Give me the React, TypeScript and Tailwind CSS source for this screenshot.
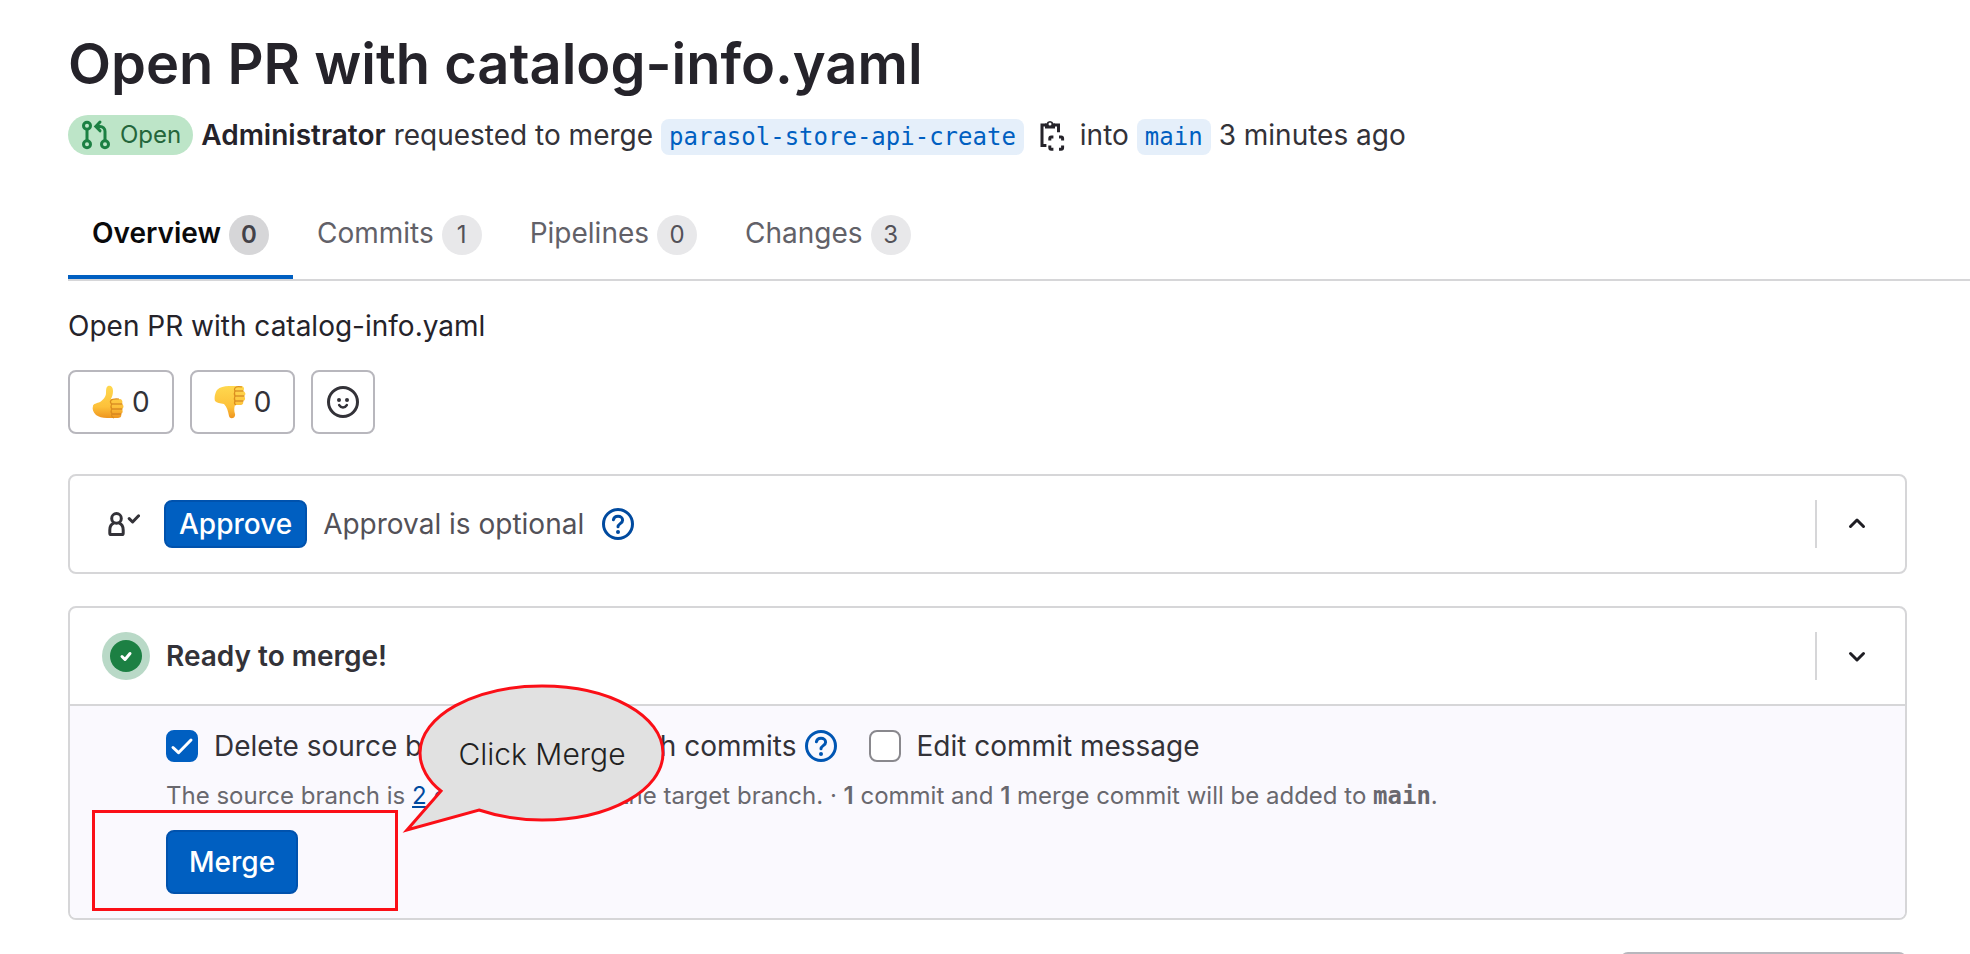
import { useState } from "react";
import type { ReactNode } from "react";

function MergeRequestIcon() {
  return (
    <svg viewBox="0 0 16 16" className="size-8" fill="none" stroke="currentColor" strokeWidth="1.5" aria-hidden="true">
      <circle cx="3.5" cy="3.4" r="1.75" />
      <circle cx="3.5" cy="12.6" r="1.75" />
      <circle cx="12.5" cy="12.6" r="1.75" />
      <path d="M3.5 5.2v5.6M12.5 10.8V6.2a2.5 2.5 0 0 0-2.5-2.5H8.4" />
      <path d="M10 1.5 7.9 3.7 10 5.9" strokeLinecap="round" />
    </svg>
  );
}

function CopyIcon() {
  return (
    <svg viewBox="0 0 16 16" className="size-8" fill="none" stroke="currentColor" strokeWidth="1.5" aria-hidden="true">
      <path d="M5 3H3v10.250h2.200M9 3h2.250v3.600" />
      <path
        d="M4.500 4.750V2.250h.7a1.900 1.900 0 0 1 3.600 0h.7v2.500zM7 1.800a.75.75 0 1 0 0 1.500.75.75 0 0 0 0-1.500z"
        fill="currentColor"
        fillRule="evenodd"
        stroke="none"
      />
      <path d="M6.900 10.800V9.650c0-.4.3-.7.7-.7h1.100M11.500 8.950h1.100c.4 0 .7.3.7.7v1.150M13.300 13.200v1.200c0 .4-.3.7-.7.7h-1.100M8.700 15.100H7.600c-.4 0-.7-.3-.7-.7v-1.200" />
    </svg>
  );
}

function SmileyIcon() {
  return (
    <svg viewBox="0 0 16 16" className="size-8" fill="none" aria-hidden="true">
      <circle cx="8" cy="8" r="7.25" stroke="currentColor" strokeWidth="1.5" />
      <circle cx="6" cy="7" r="1" fill="currentColor" />
      <circle cx="10" cy="7" r="1" fill="currentColor" />
      <path d="M6.1 9.6c.9 1.5 2.9 1.5 3.8 0" stroke="currentColor" strokeWidth="1.3" strokeLinecap="round" />
    </svg>
  );
}

function ApprovalIcon() {
  return (
    <svg viewBox="0 0 16 16" className="size-8" fill="none" stroke="currentColor" strokeWidth="1.5" aria-hidden="true">
      <circle cx="4.25" cy="5.2" r="2.4" />
      <path d="M2.9 7.6C1.4 8.2.9 9.4.9 11v1.6c0 .4.3.7.7.7h5.300c.4 0 .7-.3.7-.7V11c0-1.600-.5-2.800-2-3.400" />
      <path d="m10.6 5.3 1.7 1.7 3-3.1" strokeLinecap="round" strokeLinejoin="round" />
    </svg>
  );
}

function QuestionIcon() {
  return (
    <svg viewBox="0 0 16 16" className="size-8" fill="none" aria-hidden="true">
      <circle cx="8" cy="8" r="7.25" stroke="currentColor" strokeWidth="1.5" />
      <path d="M5.7 5.9c.2-1.1 1.1-1.75 2.3-1.75 1.3 0 2.3.8 2.3 1.95 0 1.7-2.3 1.7-2.3 3.3" stroke="currentColor" strokeWidth="1.5" strokeLinecap="round" />
      <circle cx="8" cy="12" r="1" fill="currentColor" />
    </svg>
  );
}

function Chevron({ up }: { up?: boolean }) {
  return (
    <svg viewBox="0 0 16 16" className="size-8" fill="none" stroke="currentColor" strokeWidth="1.5" strokeLinecap="round" strokeLinejoin="round" aria-hidden="true">
      <path d={up ? "M4.75 9.25 8 6l3.25 3.25" : "M4.75 6.75 8 10l3.25-3.25"} />
    </svg>
  );
}

function StatusIcon() {
  return (
    <svg viewBox="0 0 48 48" className="size-12" fill="none" aria-hidden="true">
      <circle cx="24" cy="24" r="24" fill="#b9d9c7" />
      <circle cx="24" cy="24" r="16" fill="#1c8043" />
      <path d="m20 24.5 3 3 5-6" stroke="#fff" strokeWidth="3" strokeLinecap="round" strokeLinejoin="round" />
    </svg>
  );
}

function Thumb({ down }: { down?: boolean }) {
  return (
    <svg viewBox="0 0 32 34" className="h-[34px] w-8" aria-hidden="true">
      <defs>
        <linearGradient id={down ? "skin-down" : "skin-up"} x1="0" y1="0" x2="0" y2="1">
          <stop offset="0" stopColor="#ffd84f" />
          <stop offset="0.65" stopColor="#fdc13a" />
          <stop offset="1" stopColor="#ee951f" />
        </linearGradient>
      </defs>
      {down ? (
        <g>
          <path d="M3 5C6 2 10 1 15 1h12c3 0 4 3 2 5 3 1 3 4 1 5 2 2 1 5-1 5 1 3-1 4-3 4h-5c-1 3-1 6 0 9 1 4-5 6-6 2-1-5-2-9-5-12-4-1-7-1-9-3C0 13 1 8 3 5z" fill="url(#skin-down)" />
          <path d="M21 6h8M21 11h9M21 16h8" stroke="#c9761a" strokeWidth="1.2" fill="none" strokeLinecap="round" />
          <path d="M28 2c-3-.6-6-.6-7 1-1 1-.6 2 0 3-1 2-1 3 0 5-1 2-1 3 0 5-1 2-1 3 1 4" stroke="#dc8d1e" strokeWidth="1.2" fill="none" />
        </g>
      ) : (
        <g>
          <path d="M1 21c0-2 4-3 7-4 3-2 6-5 6-9 0-3 0-6 2-7 3-1 5 1 5 5 0 3-1 6-2 8h8c3 0 4 2 3 5 2 1 2 4 0 5 1 2 1 4-1 5 1 3-1 4-4 4H15c-5 0-8-1-11-3-3-3-4-6-3-9z" fill="url(#skin-up)" />
          <path d="M20 19h10M20 24h10M20 29h9" stroke="#c9761a" strokeWidth="1.2" fill="none" strokeLinecap="round" />
          <path d="M27 14c-4-.4-7 0-8 1.500-1 1-.4 2.500.6 3.500-1 2-1 3 0 5-1 2-1 3 .4 5-1 2 0 3 2 4" stroke="#dc8d1e" strokeWidth="1.2" fill="none" />
        </g>
      )}
    </svg>
  );
}

function BranchLink({ children }: { children: ReactNode }) {
  return (
    <a href="#branch" className="mt-1 flex h-9 items-center rounded-lg bg-[#e5effa] px-2 font-['DejaVu_Sans_Mono',monospace] text-[24px] text-[#005fc1]">
      {children}
    </a>
  );
}

function Tab({ label, count, active }: { label: string; count: number; active?: boolean }) {
  return (
    <a
      href={"#" + label.toLowerCase()}
      className={
        "flex h-[86px] items-start gap-2 border-b-4 px-6 pt-[22px] " +
        (active ? "border-[#005fc1] font-semibold text-[#0a0a0b]" : "border-transparent text-[#626168]")
      }
    >
      <span className="leading-9">{label}</span>
      <span
        className={
          "grid size-10 place-items-center rounded-full text-[24px] leading-6 " +
          (active ? "bg-[#d6d6d8] text-[#434248]" : "bg-[#e8e8ea] text-[#535158]")
        }
      >
        {count}
      </span>
    </a>
  );
}

function CheckField({ id, label, initial }: { id: string; label: string; initial?: boolean }) {
  const [on, setOn] = useState(!!initial);
  return (
    <div className="flex items-center gap-4">
      <span className="grid">
        <input
          id={id}
          type="checkbox"
          checked={on}
          onChange={() => setOn(!on)}
          className="col-start-1 row-start-1 size-8 appearance-none rounded-lg border-2 border-[#89888d] bg-white checked:border-[#005fc1] checked:bg-[#005fc1]"
        />
        {on && (
          <svg viewBox="0 0 32 32" className="pointer-events-none col-start-1 row-start-1 size-8" fill="none" aria-hidden="true">
            <path d="m7 17.500 5.500 5.200L25 10" stroke="#fff" strokeWidth="3" strokeLinecap="round" strokeLinejoin="round" />
          </svg>
        )}
      </span>
      <label htmlFor={id}>{label}</label>
    </div>
  );
}

function Toggle({ up }: { up?: boolean }) {
  return (
    <div className="ml-auto flex h-12 items-center border-l-2 border-[#d6d6d8] pl-6 text-[#1f1e24]">
      <button type="button" aria-label={up ? "Collapse" : "Expand"}>
        <Chevron up={up} />
      </button>
    </div>
  );
}

function Callout() {
  return (
    <div className="pointer-events-none absolute -top-[22px] left-[332px] grid h-[152px] w-[264px]">
      <svg viewBox="0 0 264 152" className="col-start-1 row-start-1 size-full" aria-hidden="true">
        <path
          d="M39 107C26 97 18 83 18 69 18 32 72 2 140 2s121 30 121 67-53 67-121 67c-23 0-45-4-63-10L5 146z"
          fill="#e1e1e1"
          stroke="#fb0f17"
          strokeWidth="3"
        />
      </svg>
      <p className="col-start-1 row-start-1 pt-[52px] pl-4 text-center text-[30px] leading-9 font-light text-[#212121]">Click Merge</p>
    </div>
  );
}

export default function App() {
  return (
    <main className="h-screen overflow-hidden bg-white pl-[68px] font-[Inter,sans-serif] text-[28px] leading-9 text-[#333238]">
      <h1 className="pt-7 text-[56px] leading-[72px] font-semibold text-[#25232a]">Open PR with catalog-info.yaml</h1>

      <div className="mt-[15px] flex h-10 items-center gap-2">
        <span className="flex h-10 items-center gap-2 rounded-full bg-[#bde5c8] px-3 text-[24px] text-[#24663b]">
          <span className="text-[#1c8043]">
            <MergeRequestIcon />
          </span>
          Open
        </span>
        <a href="#administrator" className="font-semibold text-[#25232a]">Administrator</a>
        <span>requested to merge</span>
        <BranchLink>parasol-store-api-create</BranchLink>
        <button type="button" aria-label="Copy branch name" className="mx-1 text-[#25232a]">
          <CopyIcon />
        </button>
        <span>into</span>
        <BranchLink>main</BranchLink>
        <span>3 minutes ago</span>
      </div>

      <nav className="mt-[38px] flex border-b-2 border-[#d6d6d8]">
        <Tab label="Overview" count={0} active />
        <Tab label="Commits" count={1} />
        <Tab label="Pipelines" count={0} />
        <Tab label="Changes" count={3} />
      </nav>

      <div className="pr-[63px]">
        <p className="mt-[27px] text-[#25232a]">Open PR with catalog-info.yaml</p>

        <div className="mt-[26px] flex gap-4">
          <button type="button" className="flex h-16 items-center gap-2 rounded-lg border-2 border-[#b8b7bd] px-[22px]">
            <Thumb />
            <span>0</span>
          </button>
          <button type="button" className="flex h-16 items-center gap-2 rounded-lg border-2 border-[#b8b7bd] px-[22px]">
            <Thumb down />
            <span>0</span>
          </button>
          <button type="button" aria-label="Add reaction" className="grid size-16 place-items-center rounded-lg border-2 border-[#b8b7bd]">
            <SmileyIcon />
          </button>
        </div>

        <section className="mt-10 flex h-[100px] items-center rounded-lg border-2 border-[#d6d6d8] pr-8 pl-[38px]">
          <ApprovalIcon />
          <button type="button" className="ml-6 h-12 rounded-lg border-2 border-[#0052ad] bg-[#005fc1] px-[13px] leading-8 font-medium text-white">
            Approve
          </button>
          <span className="ml-4 text-[#535158]">Approval is optional</span>
          <button type="button" aria-label="About approvals" className="ml-[18px] text-[#004a9f]">
            <QuestionIcon />
          </button>
          <Toggle up />
        </section>

        <section className="mt-8 rounded-lg border-2 border-[#d6d6d8]">
          <div className="flex h-24 items-center pr-8 pl-8">
            <StatusIcon />
            <h2 className="ml-4 font-semibold">Ready to merge!</h2>
            <Toggle />
          </div>

          <div className="relative rounded-b-md border-t-2 border-[#d6d6d8] bg-[#faf9fe] px-24 pt-[22px] pb-6">
            <div className="flex h-9 items-center gap-8">
              <CheckField id="delete-source" label="Delete source branch" initial />
              <div className="flex items-center gap-2">
                <CheckField id="squash" label="Squash commits" />
                <button type="button" aria-label="About squashing" className="text-[#0056b3]">
                  <QuestionIcon />
                </button>
              </div>
              <CheckField id="edit-message" label="Edit commit message" />
            </div>
            <p className="mt-4 text-[24px] leading-8 text-[#69686e]">
              The source branch is{" "}
              <a href="#behind" className="text-[#004a9f] underline">
                2 commits behind
              </a>{" "}
              the target branch. · <strong className="font-semibold">1</strong> commit and{" "}
              <strong className="font-semibold">1</strong> merge commit will be added to{" "}
              <span className="font-['DejaVu_Sans_Mono',monospace] font-bold">main</span>.
            </p>
            <button type="button" className="mt-[18px] h-16 rounded-lg border-2 border-[#0052ad] bg-[#005fc1] px-[21px] font-medium text-white">
              Merge
            </button>
            <div className="pointer-events-none absolute top-[104px] left-[22px] h-[101px] w-[306px] border-[3px] border-[#fb0f17]" />
            <Callout />
          </div>
        </section>

        <div className="mt-8 ml-auto h-16 w-[287px] rounded-lg border-2 border-[#b8b7bd]" />
      </div>
    </main>
  );
}
